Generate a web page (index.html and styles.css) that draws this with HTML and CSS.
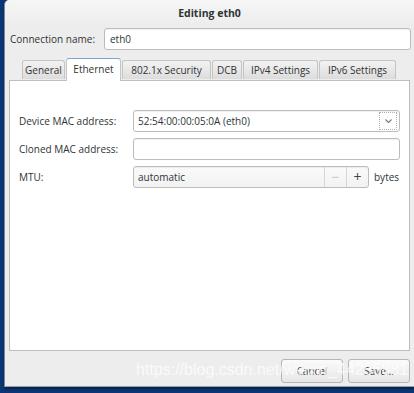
FILE: index.html
```html
<!DOCTYPE html>
<html lang="en">

<head>
	<meta charset="utf-8">
	<title>Editing eth0</title>
	<link rel="stylesheet" href="styles.css">
</head>

<body>
	<div class="dialog">
		<header class="titlebar">Editing eth0</header>

		<div class="conn-row">
			<label class="conn-label">Connection name:</label>
			<div class="entry conn-entry">eth0</div>
		</div>

		<nav class="tabs">
			<span class="tab t-general">General</span>
			<span class="tab active t-ethernet">Ethernet</span>
			<span class="tab t-security">802.1x Security</span>
			<span class="tab t-dcb">DCB</span>
			<span class="tab t-ipv4">IPv4 Settings</span>
			<span class="tab t-ipv6">IPv6 Settings</span>
		</nav>

		<section class="notebook">
			<div class="form">
				<label class="lbl">Device MAC address:</label>
				<div class="entry combo">
					<span class="combo-text">52:54:00:00:05:0A (eth0)</span>
					<span class="combo-btn">
						<svg width="9" height="6" viewBox="0 0 9 6"><path d="M1.5 1.5 L4.5 4.5 L7.5 1.5" fill="none" stroke="#777" stroke-width="1.1"/></svg>
					</span>
				</div>

				<label class="lbl">Cloned MAC address:</label>
				<div class="entry"></div>

				<label class="lbl">MTU:</label>
				<div class="mtu">
					<div class="entry spin">
						<span class="spin-text">automatic</span>
						<span class="spin-btn minus">&minus;</span>
						<span class="spin-btn plus">+</span>
					</div>
					<span class="unit">bytes</span>
				</div>
			</div>
		</section>

		<footer class="actions">
			<button class="btn">Cancel</button>
			<button class="btn">Save...</button>
		</footer>

		<div class="watermark">https://blog.csdn.net/weixin_44256881</div>
	</div>
</body>

</html>
```

FILE: styles.css
```css
body {
	margin: 0;
	background: #0b3573;
	font-family: "Open Sans", "DejaVu Sans", sans-serif;
	font-size: 10px;
	color: #2e3436;
	width: 414px;
	height: 393px;
	overflow: hidden;
}

/*____________________Dialog____________________*/

.dialog {
	position: relative;
	margin-left: 4px;
	width: 410px;
	height: 387px;
	background: #ededed;
	border-radius: 5px 0 0 0;
	border-left: 1px solid #7f8a9a;
	border-bottom: 1px solid #9aa0a8;
	box-shadow: 0 2px 2px rgba(0, 0, 0, 0.35);
	box-sizing: border-box;
	overflow: hidden;
}

.titlebar {
	height: 27px;
	line-height: 26px;
	text-align: center;
	font-weight: bold;
	font-size: 10.5px;
	color: #2e3436;
	background: linear-gradient(#f6f6f6, #ececec);
	border-radius: 5px 0 0 0;
}

/*____________________Connection name____________________*/

.conn-row {
	display: flex;
	align-items: center;
	padding: 0 3px 0 5px;
	height: 23px;
}

.conn-label {
	width: 94px;
}

.entry {
	height: 22px;
	box-sizing: border-box;
	background: #fff;
	border: 1px solid #bcbcbc;
	border-radius: 3px;
	box-shadow: inset 0 1px 1px rgba(0, 0, 0, 0.06);
	display: flex;
	align-items: center;
	padding-left: 4px;
}

.conn-entry {
	flex: 1;
	padding-left: 5px;
}

/*____________________Tabs____________________*/

.tabs {
	display: flex;
	align-items: flex-end;
	gap: 1px;
	margin-top: 8px;
	padding-left: 17px;
	height: 22px;
	position: relative;
	z-index: 1;
}

.tab {
	height: 19px;
	line-height: 18px;
	text-align: center;
	background: linear-gradient(#f3f3f3, #dcdcdc);
	border: 1px solid #c4c4c4;
	border-bottom: none;
	border-radius: 3px 3px 0 0;
	color: #333;
	box-sizing: border-box;
	margin-bottom: 1px;
}

.tab.active {
	height: 23px;
	line-height: 21px;
	background: #fff;
	border-top: 1px solid #7aa6d6;
	margin-bottom: -1px;
}

.t-general { width: 43px; }
.t-ethernet { width: 55px; }
.t-security { width: 89px; }
.t-dcb { width: 30px; }
.t-ipv4 { width: 75px; }
.t-ipv6 { width: 77px; }

.notebook {
	margin: 0 4px 0 4px;
	height: 271px;
	background: #fff;
	border: 1px solid #bdbdbd;
	box-sizing: border-box;
}

/*____________________Form____________________*/

.form {
	display: grid;
	grid-template-columns: 114px 267px;
	row-gap: 6px;
	align-items: center;
	padding: 29px 0 0 9px;
}

.combo {
	padding-right: 2px;
	justify-content: space-between;
}

.combo-btn {
	width: 18px;
	height: 18px;
	border: 1px dotted #b0b0b0;
	display: flex;
	align-items: center;
	justify-content: center;
	box-sizing: border-box;
}

.mtu {
	display: flex;
	align-items: center;
}

.spin {
	width: 236px;
	padding-right: 0;
	background: linear-gradient(#fafafa, #f2f2f2);
}

.spin-text {
	flex: 1;
}

.spin-btn {
	width: 21px;
	height: 20px;
	line-height: 19px;
	text-align: center;
	border-left: 1px solid #d6d6d6;
	font-size: 14px;
	color: #444;
}

.spin-btn.minus {
	color: #c8c8c8;
}

.unit {
	margin-left: 5px;
}

/*____________________Buttons____________________*/

.actions {
	display: flex;
	justify-content: flex-end;
	gap: 5px;
	padding: 8px 4px 0 0;
}

.btn {
	width: 62px;
	height: 24px;
	font-family: inherit;
	font-size: 10px;
	color: #2e3436;
	background: linear-gradient(#fbfbfb, #e6e6e6);
	border: 1px solid #b5b5b5;
	border-radius: 3px;
}

.watermark {
	position: absolute;
	left: 131px;
	top: 361px;
	font-family: "Liberation Sans", sans-serif;
	font-size: 16px;
	color: rgba(255, 255, 255, 0.75);
	white-space: nowrap;
}
```
